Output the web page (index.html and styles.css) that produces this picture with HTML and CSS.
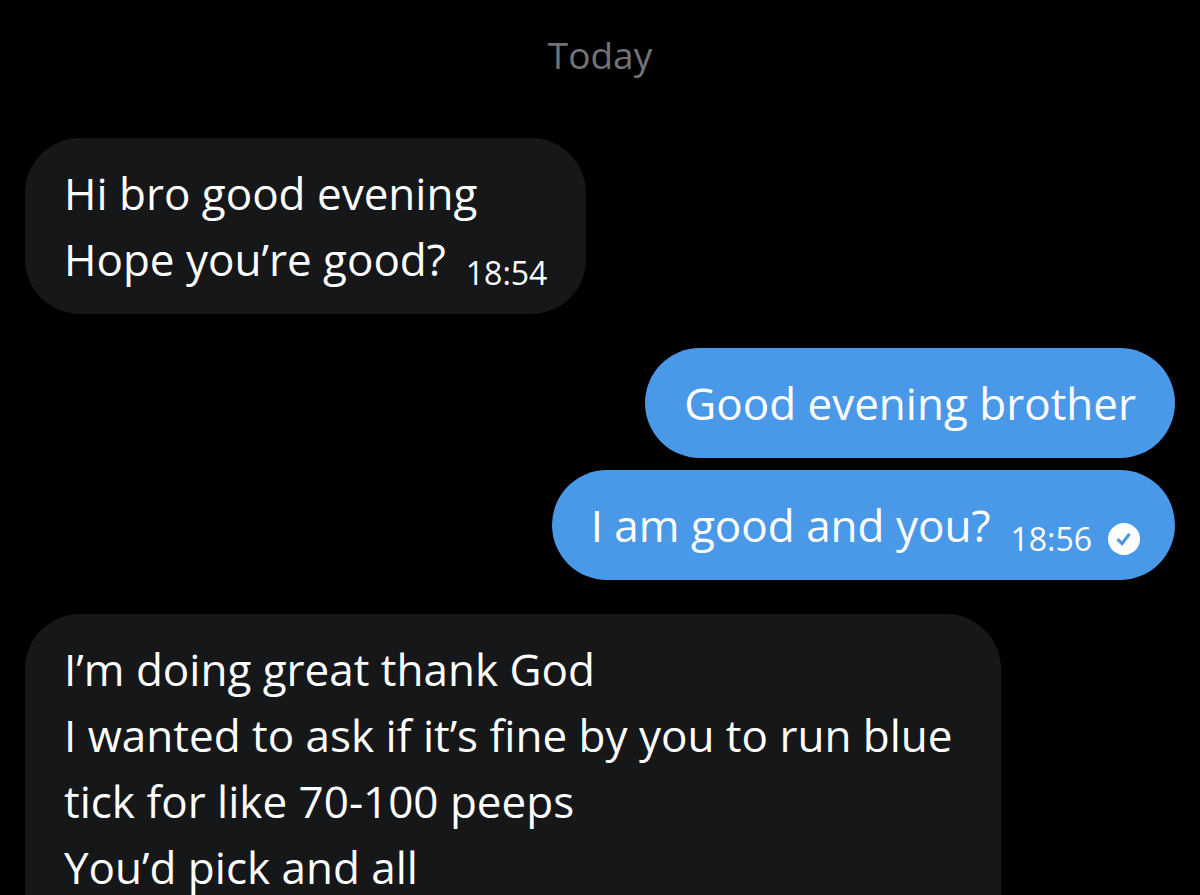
FILE: index.html
```html
<!DOCTYPE html>
<html lang="en">
<head>
  <meta charset="UTF-8">
  <meta name="viewport" content="width=device-width, initial-scale=1.0">
  <title>Messages</title>
  <link rel="stylesheet" href="styles.css">
</head>
<body>
  <main class="chat">
    <h1 class="day">Today</h1>

    <!-- received -->
    <section class="group received">
      <div class="bubble">
        <p class="text">Hi bro good evening<br>Hope you’re good?<time class="time">18:54</time></p>
      </div>
    </section>

    <!-- sent -->
    <section class="group sent">
      <div class="bubble">
        <p class="text">Good evening brother</p>
      </div>
      <div class="bubble">
        <p class="text">I am good and you?<time class="time">18:56</time><svg class="check" viewBox="0 0 32 32" role="img" aria-label="Seen">
          <circle cx="16" cy="16" r="16" fill="#fff"/>
          <path d="M9.5 16.2l4.5 4.5 7.5-9.8" fill="none" stroke="#4a99e9" stroke-width="3.2"/>
        </svg></p>
      </div>
    </section>

    <section class="group received">
      <div class="bubble open">
        <p class="text">I’m doing great thank God<br>I wanted to ask if it’s fine by you to run blue tick for like 70-100 peeps<br>You’d pick and all</p>
      </div>
    </section>
  </main>
</body>
</html>
```
FILE: styles.css
```css
* {
  box-sizing: border-box;
}

html, body {
  margin: 0;
  height: 100%;
  overflow: hidden;
  background-color: #000;
}

body {
  font-family: "Open Sans", "Liberation Sans", sans-serif;
  color: #fff;
}

.chat {
  display: flex;
  flex-direction: column;
  gap: 34px;
  min-height: 100%;
  padding: 31px 25px 0;
}

/* day separator */
.day {
  margin: 0 0 25px;
  font-size: 37px;
  font-weight: 400;
  line-height: 48px;
  text-align: center;
  color: #717376;
}

.group {
  display: flex;
  flex-direction: column;
  align-items: flex-start;
  gap: 12px;
}

.sent {
  align-items: flex-end;
}

.bubble {
  max-width: 976px;
  padding: 22px 39px;
  border-radius: 55px;
  background-color: #161719;
}

.sent .bubble {
  background-color: #4a99e9;
}

/* last bubble runs on below the fold */
.bubble.open {
  padding-bottom: 0;
  border-bottom-left-radius: 0;
  border-bottom-right-radius: 0;
}

.text {
  margin: 0;
  font-size: 44px;
  line-height: 66px;
}

/* time sits a little under the text baseline */
.time {
  margin-left: 20px;
  font-size: 32px;
  line-height: 32px;
  vertical-align: -9px;
}

.check {
  width: 32px;
  height: 32px;
  margin: 0 -4px 0 16px;
  vertical-align: -13px;
}
```
